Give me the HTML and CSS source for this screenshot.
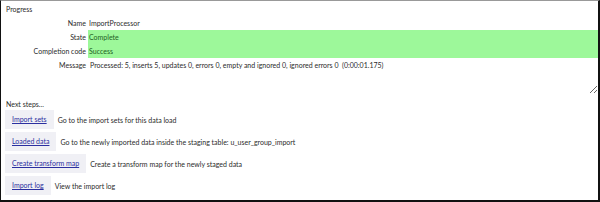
FILE: index.html
```html
<!DOCTYPE html>
<html lang="en">
<head>
  <meta charset="UTF-8">
  <title>Import Progress</title>
  <link rel="stylesheet" href="styles.css">
</head>
<body>
  <div class="frame">
    <div class="section-title">Progress</div>

    <table class="progress">
      <tr>
        <td class="label">Name</td>
        <td class="value">ImportProcessor</td>
      </tr>
      <tr>
        <td class="label">State</td>
        <td class="value ok">Complete</td>
      </tr>
      <tr>
        <td class="label">Completion code</td>
        <td class="value ok">Success</td>
      </tr>
      <tr>
        <td class="label top">Message</td>
        <td class="value"><textarea class="message" readonly>Processed: 5, inserts 5, updates 0, errors 0, empty and ignored 0, ignored errors 0  (0:00:01.175)</textarea></td>
      </tr>
    </table>

    <div class="section-title next">Next steps...</div>

    <div class="steps">
      <div class="step">
        <a href="#" class="step-btn">Import sets</a>
        <span class="step-desc">Go to the import sets for this data load</span>
      </div>
      <div class="step">
        <a href="#" class="step-btn">Loaded data</a>
        <span class="step-desc">Go to the newly imported data inside the staging table: u_user_group_import</span>
      </div>
      <div class="step">
        <a href="#" class="step-btn">Create transform map</a>
        <span class="step-desc">Create a transform map for the newly staged data</span>
      </div>
      <div class="step">
        <a href="#" class="step-btn">Import log</a>
        <span class="step-desc">View the import log</span>
      </div>
    </div>
  </div>
</body>
</html>
```

FILE: styles.css
```css
body {
  margin: 0;
  font-family: Lato, "Liberation Sans", sans-serif;
  font-size: 7px;
  color: #2b2b2b;
}

.frame {
  width: 600px;
  height: 202px;
  box-sizing: border-box;
  border-top: 1px solid #999;
  border-left: 1px solid #111;
  border-right: 2px solid #111;
  border-bottom: 2px solid #111;
  padding: 2px 0 0 5px;
  overflow: hidden;
}

.section-title {
  height: 13px;
  line-height: 13px;
}

.progress {
  border-collapse: collapse;
  width: 592px;
}

.progress td {
  padding: 0;
  height: 14px;
  line-height: 14px;
}

.label {
  width: 80px;
  text-align: right;
  padding-right: 2px !important;
  white-space: nowrap;
}

.label.top {
  vertical-align: top;
}

.value {
  padding-left: 1px !important;
}

.ok {
  background-color: #9df89a;
  color: #235f23;
}

.message {
  display: block;
  width: 100%;
  height: 36px;
  box-sizing: border-box;
  border: none;
  margin: 0;
  padding: 0 0 0 1px;
  font: inherit;
  line-height: 14px;
  color: #2b2b2b;
  resize: both;
  overflow: hidden;
}

.next {
  margin-top: 4px;
}

.steps {
  display: flex;
  flex-direction: column;
  gap: 3px;
  margin-left: -1px;
  margin-top: -1px;
}

.step {
  display: flex;
  align-items: center;
  gap: 4px;
}

.step-btn {
  background-color: #f0f0f5;
  color: #2b2fa0;
  padding: 0 7px;
  height: 19px;
  line-height: 19px;
}
```
